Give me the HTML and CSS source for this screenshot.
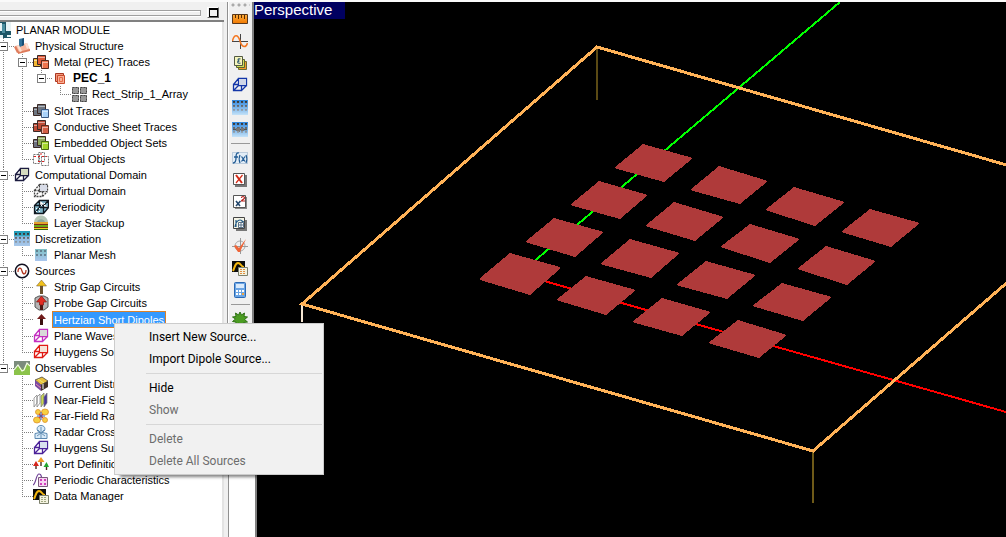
FILE: index.html
```html
<!DOCTYPE html>
<html lang="en">
<head>
<meta charset="utf-8">
<title>Planar Module</title>
<link rel="stylesheet" href="styles.css">
</head>
<body>
<svg class="defs" aria-hidden="true">
  <defs>
    <linearGradient id="g-blue" x1="0" y1="0" x2="0" y2="1"><stop offset="0" stop-color="#2f86dc"/><stop offset="1" stop-color="#c4e2f8"/></linearGradient>
    <linearGradient id="g-teal" x1="0" y1="0" x2="0" y2="1"><stop offset="0" stop-color="#1f9ab8"/><stop offset=".3" stop-color="#35a5be"/><stop offset=".4" stop-color="#8fb8e0"/><stop offset="1" stop-color="#a8c8ea"/></linearGradient>
    <linearGradient id="g-pale" x1="0" y1="0" x2="0" y2="1"><stop offset="0" stop-color="#7fc0c4"/><stop offset="1" stop-color="#a9c6ee"/></linearGradient>
    <linearGradient id="g-orange" x1="0" y1="0" x2="0" y2="1"><stop offset="0" stop-color="#ffb040"/><stop offset="1" stop-color="#f07800"/></linearGradient>
    <linearGradient id="g-dot" x1="0" y1="0" x2="0" y2="1"><stop offset="0" stop-color="#333"/><stop offset=".3" stop-color="#555"/><stop offset="1" stop-color="#9ab"/></linearGradient>
    <symbol id="grid-dots" viewBox="0 0 16 16"><path fill="url(#g-dot)" d="M1 2h2v2H1zM5 2h2v2H5zM9 2h2v2H9zM13 2h2v2h-2zM1 6h2v2H1zM5 6h2v2H5zM9 6h2v2H9zM13 6h2v2h-2zM1 10h2v2H1zM5 10h2v2H5zM9 10h2v2H9zM13 10h2v2h-2z"/></symbol>
    <symbol id="root" viewBox="0 0 16 16"><path fill="#1d5566" d="M0 0h16v16H0z"/><path fill="#e8f2f4" d="M5 1h2v8H5zM11 0h5v9h-5zM5 13h3v3H5zM12 13h4v2h-4z"/><path fill="#4d8fa0" d="M7 2h3v9H7z"/></symbol>
    <symbol id="physical" viewBox="0 0 16 16"><path fill="#f7b79d" d="M1 8l12-3 3 7-12 3z"/><path fill="#de7b5b" d="M4 14l12-3v2L4 16zM0 9l2-1 3 6-2 1z"/><path fill="#fbe0d2" d="M3 8l2-1 3 6-2 1zM11 6l2-1 2 5-2 1z"/><path fill="#2f7199" d="M5 1l5-1v7l-4 2-1-2z"/><path fill="#174f75" d="M8 1l2-1v7l-2 1z"/></symbol>
    <symbol id="stack" viewBox="0 0 16 16"><path fill="var(--a)" stroke="#3b2925" d="M.5 4.500h7v8h-7z"/><path fill="var(--m,var(--a))" stroke="#3b2925" d="M4.500 1.500h8v9h-8z"/><path fill="var(--b)" stroke="var(--e,#5c2b20)" d="M8.500 6.500h7v8h-7z"/><path stroke="#fff" opacity=".5" d="M1 6.500h3M5 3.500h7M9 8.500h6M9.500 9v5"/></symbol>
    <symbol id="virtual" viewBox="0 0 16 16"><path fill="#fff" stroke="#777" stroke-dasharray="2 1" d="M.5 3.500h6v9h-6zM5.500 1.500h6v9h-6zM8.500 5.500h7v9h-7z"/><path stroke="#d22" stroke-dasharray="2 2" d="M1 5.500h13M5 10.500h8M8 2v4"/></symbol>
    <symbol id="pec" viewBox="0 0 16 16"><path fill="#f29a7c" stroke="#a93722" d="M3.500 3.500h8v8h-8z"/><path fill="#f9b096" stroke="#c84a2c" d="M5.500 5.500h7v8h-7z"/><path fill="none" stroke="#e66a48" d="M7.500 7.500h3v4h-3z"/></symbol>
    <symbol id="array" viewBox="0 0 16 16"><path fill="#999" d="M1 1h7v7H1zM9 1h7v7H9zM1 9h7v7H1zM9 9h7v7H9z"/><path fill="none" stroke="#444" stroke-dasharray="2 1" d="M1.500 1.500h6v6h-6zM9.500 1.500h6v6h-6zM1.500 9.500h6v6h-6zM9.500 9.500h6v6h-6z"/></symbol>
    <symbol id="box" viewBox="0 0 16 16"><path fill="none" stroke="var(--a)" stroke-width="1.300" stroke-dasharray="var(--d,none)" d="M1.500 7.500h8v6h-8zM6.500 1.500h8v7h-8zM1.500 7.500l5-6M9.500 7.500l5-6M1.500 13.500l5-5M9.500 13.500l5-5"/><path fill="var(--b)" d="M7 2h7v6H7z"/></symbol>
    <symbol id="period" viewBox="0 0 16 16"><path fill="#7fb5c8" stroke="#101820" stroke-width="1.300" d="M1.500 6.500l5-5h9v7l-5 6h-9zM1.500 6.500h9v8M10.500 6.500l5-5M6.500 1.500v7h9M6.500 8.500l-5 6"/><path stroke="#fff" stroke-dasharray="1 2" d="M8 4.500h6M3 9.500h6M8 6.500h6M3 12.500h6"/></symbol>
    <symbol id="layer" viewBox="0 0 16 16"><path fill="#b5c5b5" d="M1 8c0-10 14-10 14 0z"/><path fill="#8ea69b" d="M4 8c0-5 8-5 8 0z"/><path fill="#e2a32c" d="M1 7h14v2H1z"/><path fill="#7b2c13" d="M1 9h14v1H1zM1 12h14v1H1z"/><path fill="#6aa817" d="M1 10h14v2H1z"/><path fill="#f0cf20" d="M1 13h14v1H1z"/><path fill="#376410" d="M1 14h14v1H1z"/></symbol>
    <symbol id="mesh" viewBox="0 0 16 16"><path fill="url(#g-teal)" d="M0 0h16v15H0z"/><use href="#grid-dots" width="16" height="16"/></symbol>
    <symbol id="mesh2" viewBox="0 0 16 16"><path fill="url(#g-pale)" d="M2 2h12v12H2z"/><path fill="#567" opacity=".7" d="M3 3h2v2H3zM7 3h2v2H7zM11 3h2v2h-2zM3 7h2v2H3zM7 7h2v2H7zM11 7h2v2h-2z"/></symbol>
    <symbol id="source" viewBox="0 0 16 16"><circle cx="8" cy="8" r="6.700" fill="#fff" stroke="#101020" stroke-width="1.500"/><path fill="none" stroke="#b0301a" stroke-width="1.200" d="M4 9c0-5 3-5 4-1s4 4 4-1"/></symbol>
    <symbol id="arrow" viewBox="0 0 16 16"><path fill="var(--b)" d="M7 7h3v8H7z"/><path fill="var(--a)" stroke="var(--b)" stroke-width=".5" d="M8.500 1l5 6h-10z"/></symbol>
    <symbol id="probe" viewBox="0 0 16 16"><path fill="#b5b5b5" stroke="#555" d="M2 3l4-2h5l4 2v9l-4 3H6l-4-3z"/><path fill="#4c1512" d="M7 7h3v8H7z"/><path fill="#e22b22" stroke="#7b1914" stroke-width=".7" d="M8.500 1l5 6h-3v3h-4V7h-3z"/></symbol>
    <symbol id="short" viewBox="0 0 16 16"><path fill="#3c1210" d="M7 7h3v7H7z"/><path fill="#701c1c" d="M8.500 3l4.500 5H4z"/></symbol>
    <symbol id="obs" viewBox="0 0 16 16"><path fill="#7b8c7c" d="M0 1h16v14H0z"/><path fill="#8bc34a" d="M0 11l4-6 5 5 4-7 3 2v10H0z"/><path fill="none" stroke="#f4fbe8" stroke-width="1.200" d="M0 10l4-5 4 6 2-1 3-7 3 3"/></symbol>
    <symbol id="current" viewBox="0 0 16 16"><path fill="#e9c03c" stroke="#333" stroke-width=".7" d="M2 4l7-3 6 4-7 4z"/><path fill="#7a4aa0" d="M2 4l6 5v6l-6-5z"/><path fill="#403028" d="M8 9l7-4v6l-7 4z"/><path stroke="#e68ab0" d="M3 8l5 4"/><path stroke="#eaea70" d="M5 3l6 4"/><path stroke="#fff" d="M10 8v5"/></symbol>
    <symbol id="near" viewBox="0 0 16 16"><g stroke="#777" stroke-width=".7"><path fill="#fff" d="M1 6l3-3v8l-3 4zM4 5l3-3v9l-3 4z"/><path fill="#c9d850" d="M8 4l3-3v10l-3 4z"/><path fill="#4836a0" d="M11 5l3-4v10l-3 4z"/></g></symbol>
    <symbol id="far" viewBox="0 0 16 16"><g fill="#f6cf40" stroke="#e0912c" stroke-width=".8"><ellipse cx="12" cy="4" rx="3.500" ry="3"/><ellipse cx="4" cy="12" rx="3.500" ry="3"/><circle cx="5" cy="4" r="2.500"/><circle cx="12" cy="12" r="2.500"/></g><path stroke="#d84a28" stroke-width="1.500" d="M6 6l4 4M10 6l-4 4"/><path stroke="#365fc0" d="M8 4v8M4 8h8"/></symbol>
    <symbol id="radar" viewBox="0 0 16 16"><path fill="#d9eaf8" stroke="#5b88b0" d="M8 1.500c5 0 5 6 1 7l5 1v5H2v-5l5-1c-4-1-4-7 1-7z"/><path fill="none" stroke="#6791b5" d="M5 6l3 3 3-3M4 12l4-3 4 3M8 3v11"/></symbol>
    <symbol id="port" viewBox="0 0 16 16"><path stroke="#4a2b20" stroke-width="1.400" d="M3 7v6M8 4v6M13.500 8v6"/><path fill="#d6251b" d="M0 10l3-5 3 5z"/><path fill="#ef9a23" d="M4.500 6L8 1l3.500 5z"/><path fill="#23a830" d="M10.500 11l3-5 2.500 5z"/></symbol>
    <symbol id="periodic" viewBox="0 0 16 16"><path fill="none" stroke="#6e3f96" stroke-width="1.200" d="M0 13c3-1 3-11 6-11s2 3 3 5"/><path fill="#f6d5f2" stroke="#785a7c" d="M5.500 5.500h9v9h-9z"/><path fill="#d13fbd" d="M7 7h2v2H7zM11 7h2v2h-2zM7 11h2v2H7zM11 11h2v2h-2z"/></symbol>
    <symbol id="data" viewBox="0 0 16 16"><path fill="#0c0c0c" d="M0 1h13v11H0z"/><path fill="none" stroke="#f4b710" stroke-width="2" d="M1 11c2-4 2-8 5-8s3 4 6 4"/><path fill="#f3f2df" stroke="#7c806b" d="M6.500 7.500h9v8h-9z"/><path stroke="var(--c,#a0a780)" stroke-dasharray="2 1" d="M8 9.500h6M8 11.500h6M8 13.500h6"/></symbol>
    <symbol id="ruler" viewBox="0 0 16 16"><path fill="url(#g-orange)" stroke="#59371b" d="M.5 3.500h15v9H.5z"/><path stroke="#5a2c00" d="M3.500 4v3M6.500 4v4M9.500 4v3M12.500 4v4"/></symbol>
    <symbol id="sine" viewBox="0 0 16 16"><path stroke="#444" d="M0 8.500h16M8.500 1v15"/><path fill="none" stroke="#f47620" stroke-width="1.500" d="M.500 8C2 1 6 1 8 8s6 7 7.500 2"/></symbol>
    <symbol id="eps" viewBox="0 0 16 16"><path fill="#f39a2b" stroke="#6c7032" d="M6.500 6.500h8v8h-8z"/><path fill="#cfe058" stroke="#5d6632" d="M4.500 4.500h8v8h-8z"/><path fill="#f6f6bd" stroke="#535a42" d="M2.500 1.500h8v9h-8z"/><path fill="none" stroke="#2b5470" stroke-width="1.200" d="M8.500 4c-3-1-3 2-1 2-3 0-2 3 1 2"/></symbol>
    <symbol id="bluemesh" viewBox="0 0 16 16"><path fill="url(#g-blue)" d="M0 1h16v15H0z"/><use href="#grid-dots" width="16" height="16"/></symbol>
    <symbol id="bluemesh2" viewBox="0 0 16 16"><use href="#bluemesh" width="16" height="16"/><path stroke="#555" stroke-width="1.500" d="M1 8.500h14"/><path fill="#777" d="M4 7h3v3H4zM9 7h3v3H9zM7 6h1v5H7z"/></symbol>
    <symbol id="fx" viewBox="0 0 16 16"><path fill="#e3edf6" stroke="#8fabc5" stroke-dasharray="1 1" d="M.5 2.500h15v11H.5z"/><path fill="none" stroke="#235c94" stroke-width="1.300" d="M7 3C4 2 4 6 4 8s0 5-3 5M2 7h4M8 5c-1 2-1 6 0 8M14 5c1 2 1 6 0 8M9.500 6.500l3.500 5M13 6.500l-3.500 5"/></symbol>
    <symbol id="xred" viewBox="0 0 16 16"><path fill="#777" d="M3 3h12v12H3z"/><path fill="#fff" stroke="#555" d="M1.500 1.500h11v11h-11z"/><path stroke="#d32a17" stroke-width="2" d="M4 3l6 8"/><path stroke="#d32a17" stroke-width="1.200" d="M10.500 3L4 11"/></symbol>
    <symbol id="xsq" viewBox="0 0 16 16"><path fill="#888" d="M3 3h12v12H3z"/><path fill="#fff" stroke="#555" d="M1.500 1.500h12v12h-12z"/><path stroke="#25486d" stroke-width="1.600" d="M4 7l4 5M8.500 7L4 12"/><path fill="none" stroke="#b8201b" stroke-width="1.200" d="M9.500 4c0-2 3-2 3 0 0 1-3 2-3 3h3.500"/></symbol>
    <symbol id="plot" viewBox="0 0 16 16"><path fill="#777" d="M4 4h11v11H4z"/><path fill="#f4f4e6" stroke="#444" d="M1.500 1.500h11v11h-11z"/><path fill="none" stroke="#245b88" stroke-width="1.200" d="M3 11c1-6 3-7 5-7s2 2 4 2M4 4v7"/><path fill="#fff" stroke="#587087" d="M6.500 6.500h5v5h-5zM7 9h4M9 7v4"/></symbol>
    <symbol id="check" viewBox="0 0 16 16"><circle cx="8" cy="8" r="5" fill="none" stroke="#aaa"/><path stroke="#999" d="M8.500 0v16M0 8.500h16"/><path fill="#ef6538" d="M2 8l2-1 3 3 7-9-6 13H6z"/></symbol>
    <symbol id="calc" viewBox="0 0 16 16"><rect x="2.500" y=".5" width="11" height="15" rx="1" fill="#6ba5e4" stroke="#2a69b4"/><path fill="#d9eafb" d="M4 2h8v4H4z"/><path fill="#fff" d="M4 8h2v2H4zM7 8h2v2H7zM10 8h2v2h-2zM4 11h2v2H4zM7 11h2v2H7z"/><path fill="#f4a53e" d="M10 11h2v2h-2z"/></symbol>
    <symbol id="gear" viewBox="0 0 16 16"><path fill="#4b9c22" stroke="#2f7016" d="M8 1l1.500 3 3-2-.5 3.500 3.500.500-3 2.500 3 2.500-4 .500.500 3-3.500-2L8 15l-1.500-3-3 2 .5-3L.5 10.500l3-2.500-3-2 3.500-.500L3.500 2l3 2z"/></symbol>
  </defs>
</svg>

<main class="app">
  <section class="dock" aria-label="Navigation">
    <header class="dock-bar"><span class="grip"></span><button class="max" aria-label="Maximize"></button></header>
    <div class="tree">
      <div class="root"><svg class="icon"><use href="#root"/></svg><span>PLANAR MODULE</span></div>
      <ul class="top">
        <li><div class="row"><button class="exp" aria-label="Collapse"></button><svg class="icon"><use href="#physical"/></svg><span>Physical Structure</span></div>
          <ul>
            <li><div class="row"><button class="exp" aria-label="Collapse"></button><svg class="icon metal"><use href="#stack"/></svg><span>Metal (PEC) Traces</span></div>
              <ul>
                <li><div class="row"><button class="exp" aria-label="Collapse"></button><svg class="icon"><use href="#pec"/></svg><b>PEC_1</b></div>
                  <ul class="leafs"><li><div class="row"><svg class="icon"><use href="#array"/></svg><span>Rect_Strip_1_Array</span></div></li></ul>
                </li>
              </ul>
            </li>
            <li><div class="row"><svg class="icon slot"><use href="#stack"/></svg><span>Slot Traces</span></div></li>
            <li><div class="row"><svg class="icon sheet"><use href="#stack"/></svg><span>Conductive Sheet Traces</span></div></li>
            <li><div class="row"><svg class="icon embed"><use href="#stack"/></svg><span>Embedded Object Sets</span></div></li>
            <li><div class="row"><svg class="icon"><use href="#virtual"/></svg><span>Virtual Objects</span></div></li>
          </ul>
        </li>
        <li><div class="row"><button class="exp" aria-label="Collapse"></button><svg class="icon box-dark"><use href="#box"/></svg><span>Computational Domain</span></div>
          <ul>
            <li><div class="row"><svg class="icon box-dash"><use href="#box"/></svg><span>Virtual Domain</span></div></li>
            <li><div class="row"><svg class="icon"><use href="#period"/></svg><span>Periodicity</span></div></li>
            <li><div class="row"><svg class="icon"><use href="#layer"/></svg><span>Layer Stackup</span></div></li>
          </ul>
        </li>
        <li><div class="row"><button class="exp" aria-label="Collapse"></button><svg class="icon"><use href="#mesh"/></svg><span>Discretization</span></div>
          <ul><li><div class="row"><svg class="icon"><use href="#mesh2"/></svg><span>Planar Mesh</span></div></li></ul>
        </li>
        <li><div class="row"><button class="exp" aria-label="Collapse"></button><svg class="icon"><use href="#source"/></svg><span>Sources</span></div>
          <ul>
            <li><div class="row"><svg class="icon strip"><use href="#arrow"/></svg><span>Strip Gap Circuits</span></div></li>
            <li><div class="row"><svg class="icon"><use href="#probe"/></svg><span>Probe Gap Circuits</span></div></li>
            <li><div class="row selected"><svg class="icon"><use href="#short"/></svg><span>Hertzian Short Dipoles</span></div></li>
            <li><div class="row"><svg class="icon box-plane"><use href="#box"/></svg><span>Plane Waves</span></div></li>
            <li><div class="row"><svg class="icon box-red"><use href="#box"/></svg><span>Huygens Sources</span></div></li>
          </ul>
        </li>
        <li><div class="row"><button class="exp" aria-label="Collapse"></button><svg class="icon"><use href="#obs"/></svg><span>Observables</span></div>
          <ul>
            <li><div class="row"><svg class="icon"><use href="#current"/></svg><span>Current Distributions</span></div></li>
            <li><div class="row"><svg class="icon"><use href="#near"/></svg><span>Near-Field Sensors</span></div></li>
            <li><div class="row"><svg class="icon"><use href="#far"/></svg><span>Far-Field Radiation</span></div></li>
            <li><div class="row"><svg class="icon"><use href="#radar"/></svg><span>Radar Cross Section</span></div></li>
            <li><div class="row"><svg class="icon box-violet"><use href="#box"/></svg><span>Huygens Surfaces</span></div></li>
            <li><div class="row"><svg class="icon"><use href="#port"/></svg><span>Port Definitions</span></div></li>
            <li><div class="row"><svg class="icon"><use href="#periodic"/></svg><span>Periodic Characteristics</span></div></li>
            <li><div class="row"><svg class="icon"><use href="#data"/></svg><span>Data Manager</span></div></li>
          </ul>
        </li>
      </ul>
    </div>
  </section>

  <aside class="side">
    <div class="tools" role="toolbar" aria-label="Tools">
      <i class="handle"></i>
      <button aria-label="Units"><svg class="icon"><use href="#ruler"/></svg></button>
      <button aria-label="Frequency"><svg class="icon"><use href="#sine"/></svg></button>
      <button aria-label="Materials"><svg class="icon"><use href="#eps"/></svg></button>
      <button aria-label="Domain"><svg class="icon box-blue"><use href="#box"/></svg></button>
      <button aria-label="Mesh"><svg class="icon"><use href="#bluemesh"/></svg></button>
      <button aria-label="Mesh settings"><svg class="icon"><use href="#bluemesh2"/></svg></button>
      <hr>
      <button aria-label="Functions"><svg class="icon"><use href="#fx"/></svg></button>
      <button aria-label="Variables"><svg class="icon"><use href="#xred"/></svg></button>
      <button aria-label="Expressions"><svg class="icon"><use href="#xsq"/></svg></button>
      <button aria-label="Plots"><svg class="icon"><use href="#plot"/></svg></button>
      <button aria-label="Verify"><svg class="icon"><use href="#check"/></svg></button>
      <button aria-label="Data"><svg class="icon data-tool"><use href="#data"/></svg></button>
      <button aria-label="Calculator"><svg class="icon"><use href="#calc"/></svg></button>
      <hr>
      <button aria-label="Run"><svg class="icon"><use href="#gear"/></svg></button>
    </div>
    <div class="rest"></div>
  </aside>

  <section class="view" aria-label="Viewport">
    <div class="label">Perspective</div>
    <svg class="scene" viewBox="254 2 752 535" preserveAspectRatio="xMinYMin slice" shape-rendering="crispEdges">
      <path stroke="#5b4a14" stroke-width="2" d="M597 48v52"/>
      <path stroke="#6e5a18" stroke-width="2" d="M813 451v52"/>
      <path stroke="#f5e6d2" stroke-width="2" d="M302 304v18"/>
      <path stroke="#0f0" stroke-width="2" d="M840 2L525 269"/>
      <path stroke="#f00" stroke-width="2" d="M530 277l476 135"/>
      <path fill="none" stroke="#ffb257" stroke-width="3" d="M1010 166L597 47 302 304l511 147 197-171"/>
      <g fill="#af3a3a">
        <path d="M510 253l50 14v2l-30 26-50-15v-2zM554 218l50 14-29 25-50-15zM599 181l49 14-28 24-50-14zM643 144l50 14-29 24-50-14z"/>
        <path d="M586 276l50 14-30 25-50-15zM630 239l50 14-29 25-51-14zM674 202l50 15-29 24-50-15zM719 166l49 15-28 23-50-14z"/>
        <path d="M662 298l49 14-29 24-50-14zM706 261l50 14-29 24-51-14zM750 224l50 15-30 24-50-16zM794 187l51 15-30 24-50-16z"/>
        <path d="M738 320l49 15-28 23-51-15zM782 283l50 14-29 24-51-15zM826 246l50 15-29 24-50-16zM870 209l50 14-29 24-50-15z"/>
      </g>
    </svg>
  </section>

  <div class="menu" role="menu">
    <button role="menuitem">Insert New Source...</button>
    <button role="menuitem">Import Dipole Source...</button>
    <hr>
    <button role="menuitem">Hide</button>
    <button role="menuitem" disabled>Show</button>
    <hr>
    <button role="menuitem" disabled>Delete</button>
    <button role="menuitem" disabled>Delete All Sources</button>
  </div>
</main>
</body>
</html>
```
FILE: styles.css
```css
* { box-sizing: border-box; }
body { margin: 0; background: #f0f0f0; font: 11px/16px "Liberation Sans", Arial, sans-serif; color: #000; }
button { margin: 0; padding: 0; border: 0; background: none; font: inherit; color: inherit; }
ul { list-style: none; margin: 0; padding: 0; }
.defs { position: absolute; width: 0; height: 0; }
.icon { flex: none; width: 16px; height: 16px; display: block; }

.app { position: relative; display: flex; height: 100vh; overflow: hidden; border-top: 2px solid #fafafa; }

.dock { flex: none; width: 227px; display: flex; flex-direction: column; padding-right: 3px; }
.dock-bar { flex: none; height: 20px; display: flex; align-items: center; gap: 6px; padding-right: 5px; border-bottom: 2px solid #808080; }
.grip { flex: 1; height: 6px; margin-top: 4px; border: solid #a0a0a0; border-width: 1px 1px 1px 0; box-shadow: inset 0 1px #fff, 0 1px #fff; }
.max { width: 12px; height: 11px; margin-top: 3px; border: 1px solid #fff; border-right-color: #666; border-bottom-color: #666; display: grid; place-items: center; }
.max::after { content: ""; width: 7px; height: 6px; border: 1px solid #000; border-top-width: 2px; }
.tree { flex: 1; background: #fff; border-right: 2px solid #e3e3e3; overflow: hidden; white-space: nowrap; }

.root { display: flex; gap: 5px; margin-left: -5px; }
.top { margin-left: -6px; }
.tree ul ul { margin-left: 19px; }
.tree .leafs { padding-bottom: 1px; }
.tree li { position: relative; }
.tree li::before { content: ""; position: absolute; left: 9px; top: 0; bottom: 0; width: 1px; background: repeating-linear-gradient(#808080 0 1px, transparent 1px 2px); }
.tree li:last-child::before { bottom: auto; height: 8px; }
.row { position: relative; display: flex; gap: 5px; height: 16px; padding-left: 20px; }
.row::before { content: ""; position: absolute; left: 9px; top: 8px; width: 11px; height: 1px; background: repeating-linear-gradient(90deg, #808080 0 1px, transparent 1px 2px); }
.exp { position: absolute; left: 5px; top: 4px; width: 9px; height: 9px; border: 1px solid #808080; background: linear-gradient(#000, #000) center / 5px 1px no-repeat #fff; }
.row b { font-size: 12px; }
.selected { height: 17px; gap: 3px; }
.selected span { padding: 0 1px; border: 1px dotted #000; outline: 1px solid #d9822b; outline-offset: -1px; background: #3399ff; color: #fff; line-height: 16px; }

.metal { --a: #f2b632; --m: #e05a38; --b: #f0744e; }
.slot { --a: #6d7580; --b: #a9d2fa; --e: #3a5780; }
.sheet { --a: #bd4b36; --b: #d45f45; }
.embed { --a: #6e7280; --m: #8ea85a; --b: #a2d629; --e: #4a6b14; }
.box-dark { --a: #1c1c40; --b: #d5dbc0; }
.box-dash { --a: #444; --b: #d8dce8; --d: 2px 1px; }
.box-plane { --a: #c42fc0; --b: #d8d8d8; }
.box-red { --a: #e01c14; --b: #f5e4d8; }
.box-violet { --a: #4b2299; --b: #d9e0ee; }
.box-blue { --a: #1336a8; --b: #cfd6e8; }
.strip { --a: #f2c21c; --b: #6a5330; }
.data-tool { --c: #e09040; }

.side { flex: none; width: 27px; display: flex; flex-direction: column; border-left: 1px solid #909090; z-index: 1; }
.tools { flex: none; height: 321px; overflow: hidden; display: flex; flex-direction: column; align-items: center; padding-right: 1px; border-left: 1px solid #fff; border-right: 2px solid #808080; }
.tools button { flex: none; width: 22px; height: 22px; display: grid; place-items: center; }
.tools hr { flex: none; width: 19px; height: 1px; margin: 3px 0; border: 0; background: #999; }
.handle { flex: none; width: 20px; height: 6px; background: radial-gradient(circle, #aaa 1px, transparent 2px) 0 0 / 6px 6px; }
.rest { flex: 1; margin: 0 -3px 0 -4px; border-left: 4px solid #f0f0f0; border-right: 2px solid #808080; background: #fff; box-shadow: inset 1px 0 #909090; }

.view { flex: 1; position: relative; min-width: 0; background: #000; z-index: 0; }
.scene { display: block; width: 100%; height: 100%; }
.label { position: absolute; left: 0; top: 0; width: 91px; height: 17px; background: #000060; color: #fff; font-size: 15px; line-height: 16px; }

.menu { position: absolute; left: 114px; top: 321px; z-index: 2; width: 210px; padding: 2px 1px; border: 1px solid #ccc; background: #f1f1f1; box-shadow: 4px 4px 3px -2px rgba(0, 0, 0, .5); font: 12px/22px Roboto, "Open Sans", sans-serif; }
.menu button { display: block; width: 100%; height: 22px; padding-left: 33px; text-align: left; }
.menu button:disabled { color: #6d6d6d; }
.menu hr { height: 1px; margin: 3px 0 3px 30px; border: 0; background: #d7d7d7; }
```
